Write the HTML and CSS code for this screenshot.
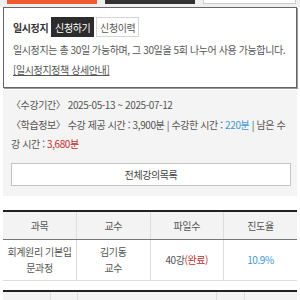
FILE: index.html
```html
<!DOCTYPE html>
<html lang="ko">
<head>
<meta charset="utf-8">
<link rel="stylesheet" href="styles.css">
</head>
<body>
<div class="tabs">
  <div class="tab tab-orange"></div>
  <div class="tab tab-dark"></div>
  <div class="tab tab-white"></div>
</div>
<div class="pause-box">
  <div class="pause-head">
    <span class="pause-title">일시정지</span>
    <span class="btn btn-dark">신청하기</span>
    <span class="btn btn-light">신청이력</span>
  </div>
  <p class="pause-desc">일시정지는 총 30일 가능하며, 그 30일을 5회 나누어 사용 가능합니다.</p>
  <a class="pause-link" href="#">[일시정지정책 상세안내]</a>
</div>
<div class="info">
  <p class="info-line">〈수강기간〉 2025-05-13 ~ 2025-07-12</p>
  <p class="info-line"><span>〈학습정보〉 수강 제공 시간 : 3,900분 | 수강한 시간 : </span><span class="blue">220분</span><span> | 남은 수</span><span>강 시간 : </span><span class="red">3,680분</span></p>
  <div class="all-btn">전체강의목록</div>
</div>
<table class="grid">
  <thead>
    <tr><th>과목</th><th>교수</th><th>파일수</th><th>진도율</th></tr>
  </thead>
  <tbody>
    <tr><td>회계원리 기본입<br>문과정</td><td>김기동<br>교수</td><td>40강<span class="red">(완료)</span></td><td class="blue">10.9%</td></tr>
  </tbody>
</table>
<table class="grid grid2">
  <thead>
    <tr><th class="c1"></th><th class="c2"></th><th class="c3"></th><th class="c4"></th><th></th></tr>
  </thead>
</table>
</body>
</html>
```
FILE: styles.css
```css
html, body {
  margin: 0;
  padding: 0;
  background: #fff;
}
body {
  width: 300px;
  height: 300px;
  overflow: hidden;
  font-family: "Noto Sans CJK KR", "Noto Sans", sans-serif;
  font-size: 10px;
  letter-spacing: -0.4px;
  color: #555;
}
p { margin: 0; }
.tabs {
  display: flex;
  gap: 8px;
  padding: 0 4px 3px 7px;
  background: #efefef;
}
.tab {
  width: 90px;
  height: 4px;
}
.tab-orange { background: #f15a2e; }
.tab-dark { background: #333; }
.tab-white { background: #fff; border: 1px solid #ccc; border-top: 0; height: 3px; width: 91px; }
.pause-box {
  margin: 0 3px;
  border: 1px solid #666;
  box-shadow: 1px 1px 0 #999;
  padding: 9px 9px 0;
  height: 70px;
}
.pause-head {
  display: flex;
  align-items: center;
  gap: 2px;
  height: 20px;
}
.pause-title {
  font-weight: bold;
  color: #333;
  margin-right: 1px;
}
.btn {
  width: 43px;
  height: 20px;
  box-sizing: border-box;
  display: flex;
  align-items: center;
  justify-content: center;
  font-size: 10px;
}
.btn-dark { background: #2c2c2c; color: #fff; }
.btn-light { border: 1px solid #d5d5d5; color: #555; background: #fff; }
.pause-desc {
  margin-top: 5px;
  line-height: 15px;
}
.pause-link {
  display: inline-block;
  margin-top: 5px;
  color: #555;
  text-decoration: underline;
  line-height: 15px;
}
.info {
  margin: 2px 3px 0;
  background: #f4f4f4;
  padding: 5px 6px 10px 8px;
}
.info-line {
  line-height: 19px;
}
.info-line + .info-line { margin-top: 1px; }
.blue { color: #3f9ad2; }
.red { color: #bf2f2f; }
.all-btn {
  margin-top: 10px;
  height: 23px;
  box-sizing: border-box;
  border: 1px solid #c4c4c4;
  background: #fff;
  display: flex;
  align-items: center;
  justify-content: center;
  color: #444;
}
.grid {
  margin: 14px 3px 0;
  width: 294px;
  border-collapse: collapse;
  table-layout: fixed;
  border-top: 2px solid #222;
}
.grid th {
  height: 27px;
  background: #f3f3f3;
  font-weight: normal;
  color: #555;
  border-left: 1px solid #ddd;
  border-bottom: 1px solid #777;
  padding: 0;
}
.grid th:first-child, .grid td:first-child { border-left: 0; }
.grid td {
  height: 40px;
  text-align: center;
  border-left: 1px solid #ddd;
  border-bottom: 1px solid #ddd;
  padding: 0;
  line-height: 16px;
}
.grid2 { margin-top: 9px; }
.grid2 .c1 { width: 47px; }
.grid2 .c2 { width: 26px; }
.grid2 .c3 { width: 138px; }
.grid2 .c4 { width: 27px; }
```
